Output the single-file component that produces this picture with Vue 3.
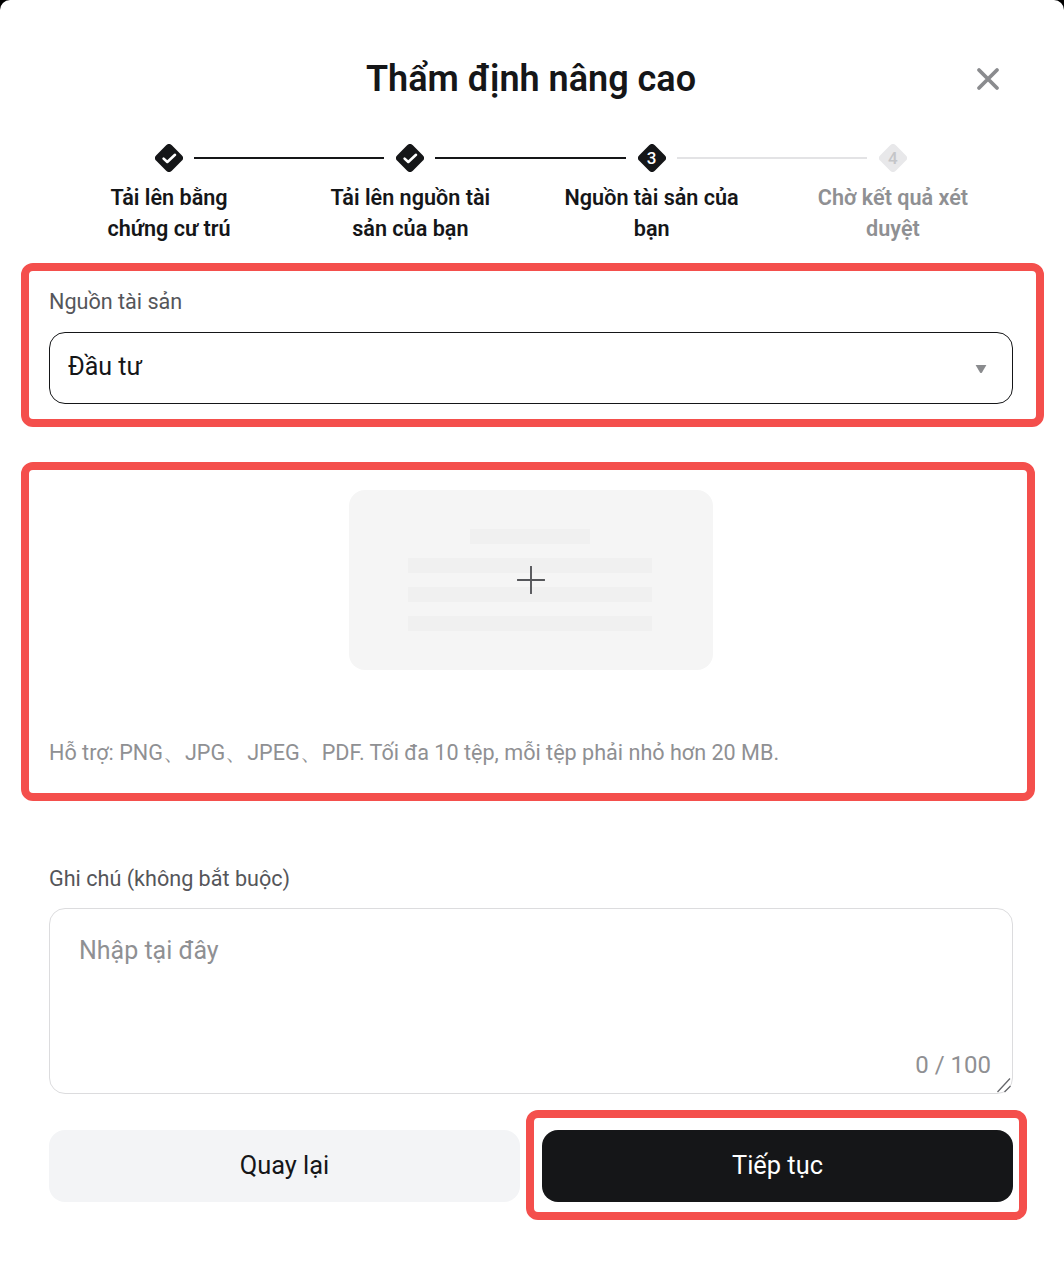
<script setup>
const steps = [
  { label: 'Tải lên bằng chứng cư trú', state: 'done' },
  { label: 'Tải lên nguồn tài sản của bạn', state: 'done' },
  { label: 'Nguồn tài sản của bạn', state: 'active', n: 3 },
  { label: 'Chờ kết quả xét duyệt', state: 'todo', n: 4 },
]
</script>

<template>
  <div class="page">
    <div class="modal">
      <header class="head">
        <h1 class="title">Thẩm định nâng cao</h1>
        <svg class="close" viewBox="0 0 24 24" width="24" height="24">
          <path d="M3 3 21 21M21 3 3 21" stroke="#8a8b8e" stroke-width="3.8" stroke-linecap="round" fill="none" />
        </svg>
      </header>

      <ol class="steps">
        <li v-for="(s, i) in steps" :key="i" class="step" :class="s.state">
          <span class="node">
            <svg viewBox="0 0 28 28" width="28" height="28">
              <rect x="3" y="3" width="22" height="22" rx="4" transform="rotate(45 14 14)" :fill="s.state === 'todo' ? '#e8e8ea' : '#151618'" />
              <path v-if="s.state === 'done'" d="M8.6 14.6 12.3 18 20 10.8" stroke="#fff" stroke-width="2.6" fill="none" stroke-linecap="round" stroke-linejoin="round" />
            </svg>
            <span v-if="s.n" class="num">{{ s.n }}</span>
          </span>
          <span v-if="i < 3" class="link" :class="{ off: i === 2 }"></span>
          <span class="step-label">{{ s.label }}</span>
        </li>
      </ol>

      <section class="source">
        <label class="field-label">Nguồn tài sản</label>
        <div class="select">
          <span class="select-value">Đầu tư</span>
          <svg class="caret" viewBox="0 0 12 10" width="12" height="10"><path d="M.6 1h10.8L7 8.4q-1 1.2-2 0z" fill="#8a8b8e" /></svg>
        </div>
        <span class="mark mark-source"></span>
      </section>

      <section class="upload">
        <div class="dropzone">
          <span class="bar short"></span>
          <span class="bar"></span>
          <span class="bar"></span>
          <span class="bar"></span>
          <svg class="plus" viewBox="0 0 28 28" width="28" height="28">
            <path d="M14 .5v27M.5 14h27" stroke="#55565a" stroke-width="1.9" stroke-linecap="round" />
          </svg>
        </div>
        <p class="hint">Hỗ trợ: PNG、JPG、JPEG、PDF. Tối đa 10 tệp, mỗi tệp phải nhỏ hơn 20 MB.</p>
        <span class="mark mark-upload"></span>
      </section>

      <section class="note">
        <label class="field-label">Ghi chú (không bắt buộc)</label>
        <div class="textarea">
          <span class="placeholder">Nhập tại đây</span>
          <span class="count">0 / 100</span>
          <svg class="grip" viewBox="0 0 16 16" width="16" height="16">
            <path d="M.5 14 13 .5M7.5 14 13.5 8" stroke="#66676b" stroke-width="1.3" fill="none" />
          </svg>
        </div>
      </section>

      <footer class="actions">
        <button class="btn back"><span class="btn-text">Quay lại</span></button>
        <div class="next-wrap">
          <button class="btn next"><span class="btn-text">Tiếp tục</span></button>
          <span class="mark mark-next"></span>
        </div>
      </footer>
    </div>
  </div>
</template>

<style>
html, body { margin: 0; background: #fff; }
</style>

<style scoped>
.page {
  width: 1064px;
  height: 1262px;
  overflow: hidden;
  background: #000;
  font-family: Roboto, "Noto Sans", sans-serif;
  color: #151618;
}
.modal {
  box-sizing: border-box;
  height: 1262px;
  padding: 0 51px 0 49px;
  background: #fff;
  border-radius: 10px 10px 0 0;
}
.head {
  position: relative;
  height: 142px;
  display: flex;
  justify-content: center;
  align-items: flex-start;
}
.title {
  margin: 57px 0 0;
  font-size: 36px;
  line-height: 44px;
  font-weight: 600;
}
.close { position: absolute; right: 13px; top: 67px; }
.steps {
  list-style: none;
  margin: 0 0 0 -0.6px;
  padding: 0;
  display: grid;
  grid-template-columns: repeat(4, 241.3px);
}
.step {
  position: relative;
  display: flex;
  flex-direction: column;
  align-items: center;
  height: 121px;
}
.node { position: relative; width: 28px; height: 28px; margin-top: 2px; }
.node svg { display: block; }
.num {
  position: absolute;
  inset: 0;
  display: flex;
  align-items: center;
  justify-content: center;
  color: #fff;
  font-size: 17px;
  font-weight: 500;
}
.todo .num { color: #c4c5c8; }
.link {
  position: absolute;
  top: 15px;
  left: 145.5px;
  width: 190.5px;
  height: 2px;
  background: #151618;
}
.link.off { background: #e3e3e5; }
.step-label {
  width: 178px;
  margin-top: 10px;
  text-align: center;
  font-size: 21.6px;
  line-height: 31px;
  font-weight: 600;
}
.todo .step-label { color: #8f9093; }
.source { position: relative; height: 200px; }
.field-label {
  display: block;
  color: #55565a;
  font-size: 21.6px;
  line-height: 30px;
}
.source .field-label { padding-top: 24px; }
.select {
  box-sizing: border-box;
  width: 964px;
  height: 72px;
  margin-top: 15px;
  padding: 0 25px 0 18px;
  display: flex;
  align-items: center;
  justify-content: space-between;
  border: 1px solid #151618;
  border-radius: 16px;
  font-size: 25px;
}
.select-value { padding-bottom: 4px; }
.caret { margin-top: 1px; }
.mark {
  position: absolute;
  box-sizing: border-box;
  border: 8px solid #f44f4c;
  border-radius: 12px;
  pointer-events: none;
}
.mark-source { left: -28px; top: 0; width: 1023px; height: 164px; }
.upload {
  position: relative;
  box-sizing: border-box;
  height: 400px;
  padding-top: 27px;
}
.dropzone {
  position: relative;
  box-sizing: border-box;
  width: 364px;
  height: 180px;
  margin-left: 300px;
  padding: 39px 2px 0 0;
  display: flex;
  flex-direction: column;
  align-items: center;
  gap: 14.5px;
  border-radius: 16px;
  background: #f5f5f5;
}
.bar { width: 243.5px; height: 14.5px; background: #f0f0f0; }
.bar.short { width: 120px; }
.plus { position: absolute; left: 168px; top: 76px; }
.hint {
  margin: 69px 0 0;
  color: #8f9093;
  font-size: 21.6px;
  line-height: 28px;
}
.mark-upload { left: -28px; top: -1px; width: 1014px; height: 339px; }
.note { height: 267px; }
.note .field-label { padding-top: 1px; padding-bottom: 14px; }
.textarea {
  position: relative;
  box-sizing: border-box;
  width: 964px;
  height: 186px;
  border: 1px solid #dcdcde;
  border-radius: 16px;
}
.placeholder {
  position: absolute;
  left: 29px;
  top: 26px;
  color: #8f9093;
  font-size: 25px;
  line-height: 32px;
}
.count {
  position: absolute;
  right: 21px;
  bottom: 12px;
  color: #8f9093;
  font-size: 24px;
  line-height: 32px;
}
.grip { position: absolute; right: -1px; bottom: -1px; }
.actions { display: flex; gap: 22px; width: 964px; }
.next-wrap { position: relative; flex: 1 1 0; display: flex; }
.btn {
  flex: 1 1 0;
  height: 72px;
  padding: 0 0 2px;
  border: 0;
  border-radius: 16px;
  font: inherit;
  font-size: 25.4px;
}
.back { background: #f3f4f6; color: #151618; }
.next { background: #151618; color: #fff; }
.mark-next { left: -16px; top: -20px; width: 501px; height: 110px; }
</style>
